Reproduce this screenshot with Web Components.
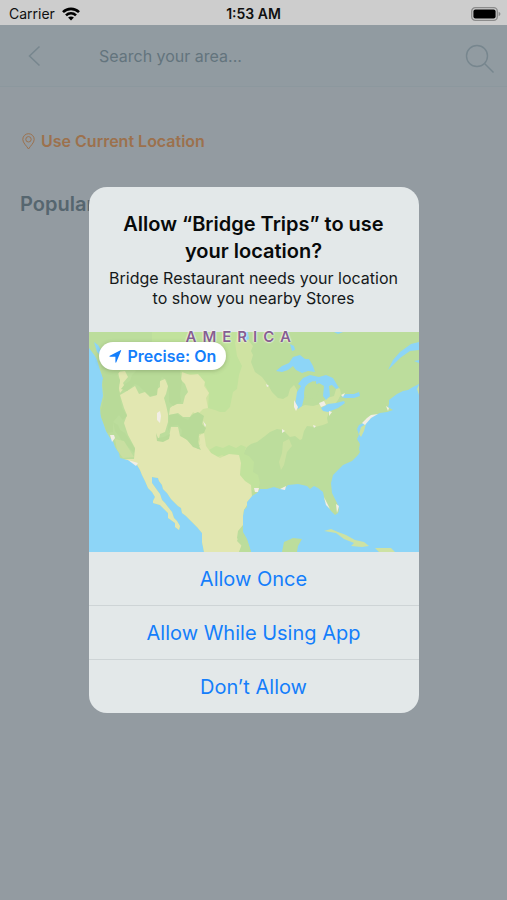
<!DOCTYPE html>
<html lang="en">
<head>
<meta charset="utf-8">
<meta name="viewport" content="width=device-width, initial-scale=1">
<title>Search area</title>
<style>
   html, body {
      margin: 0;
      height: 100%;
   }
   body {
      font-family: Inter, "Liberation Sans", sans-serif;
      background: #939ba1;
      --ink: #63747d;
      --line: #77868e;
      --blue: #147efb;
      --accent: #9c714d;
      --card: #e3e8e9;
   }
</style>
</head>
<body>
<area-screen>
   <status-bar slot="status" carrier="Carrier" time="1:53 AM"></status-bar>
   <search-header slot="header"></search-header>
   <current-location>Use Current Location</current-location>
   <section-title>Popular</section-title>
   <permission-dialog slot="dialog">
      <span slot="title">Allow “Bridge Trips” to use your location?</span>
      <span slot="message">Bridge Restaurant needs your location to show you nearby Stores</span>
      <location-map slot="map"></location-map>
      <dialog-action>Allow Once</dialog-action>
      <dialog-action>Allow While Using App</dialog-action>
      <dialog-action>Don’t Allow</dialog-action>
   </permission-dialog>
</area-screen>

<script>
"use strict";
/* [ templates ]
=================================== */
const
   areaScreen = `
      <style>
         :host {
            display: flex;
            flex-direction: column;
            position: relative;
            min-height: 100%;
         }
         main {
            display: flex;
            flex-direction: column;
            gap: 40px;
            padding: 44px 20px;
         }
         .overlay {
            position: absolute;
            inset: 0;
            display: flex;
            align-items: center;
            justify-content: center;
         }
      </style>
      <slot name="status"></slot>
      <slot name="header"></slot>
      <main><slot></slot></main>
      <div class="overlay"><slot name="dialog"></slot></div>
   `,
   statusBar = `
      <style>
         :host {
            display: grid;
            grid-template-columns: 1fr auto 1fr;
            align-items: center;
            height: 25px;
            padding: 2px 6px 0;
            box-sizing: border-box;
            background: #cdcdcd;
            color: #101010;
            font-size: 14px;
         }
         .left {
            display: flex;
            align-items: center;
            gap: 7px;
            padding-left: 3px;
         }
         .time { font-weight: 600; }
         .battery { justify-self: end; }
         svg { display: block; }
      </style>
      <div class="left">
         <span class="carrier"></span>
         <svg width="18" height="14" viewBox="0 0 18 14" fill="none" stroke="#000" stroke-width="2.6">
            <path d="M1 5.2C5.4 .8 12.6 .8 17 5.2"/>
            <path d="M4 8.4c2.8-2.8 7.2-2.8 10 0"/>
            <path d="M9 13.6l-2.9-3c1.6-1.5 4.2-1.5 5.8 0z" fill="#000" stroke="none"/>
         </svg>
      </div>
      <span class="time"></span>
      <svg class="battery" width="30" height="14" viewBox="0 0 30 14">
         <rect x=".7" y=".7" width="25.6" height="12.6" rx="3.6" fill="none" stroke="#8b8b8b" stroke-width="1.3"/>
         <rect x="2.4" y="2.4" width="22.2" height="9.2" rx="2" fill="#000"/>
         <path d="M27.6 4.8c2.4.8 2.4 3.6 0 4.4z" fill="#8b8b8b"/>
      </svg>
   `,
   searchHeader = `
      <style>
         :host {
            display: flex;
            align-items: center;
            height: 62px;
            padding: 0 12px 0 20px;
            box-sizing: border-box;
            background: #919ba1;
            border-bottom: 1px solid #8c989e;
         }
         button {
            display: flex;
            padding: 0;
            border: 0;
            background: none;
         }
         svg { fill: none; stroke: var(--line); }
         .back { padding: 0 8px; }
         input {
            flex: 1;
            min-width: 0;
            margin-left: 49px;
            padding: 0;
            border: 0;
            outline: 0;
            background: none;
            font: 400 16px/24px Inter, "Liberation Sans", sans-serif;
            color: var(--ink);
         }
         input::placeholder { color: var(--ink); opacity: 1; }
         .find { margin-top: 6px; }
      </style>
      <button class="back" aria-label="Back">
         <svg width="14" height="22" viewBox="0 0 14 22" stroke-width="1.5"><path d="M11.5 1.5L1.5 11l10 9.500"/></svg>
      </button>
      <input type="text" aria-label="Search your area" placeholder="Search your area...">
      <button class="find" aria-label="Search">
         <svg width="30" height="30" viewBox="0 0 30 30" stroke-width="1.400"><circle cx="12" cy="12" r="10.500"/><path d="M19.500 19.500l9 9"/></svg>
      </button>
   `,
   currentLocation = `
      <style>
         :host { display: block; }
         a {
            display: flex;
            align-items: center;
            gap: 6px;
            padding-left: 2px;
            color: var(--accent);
            font-size: 16px;
            font-weight: 600;
            line-height: 20px;
            text-decoration: none;
         }
      </style>
      <a href="#">
         <svg width="13" height="17" viewBox="0 0 13 17" fill="none" stroke="#9c714d">
            <path d="M6.500 16C4.500 12.800 .8 9.800 .8 6.400a5.700 5.700 0 0 1 11.400 0c0 3.400-3.700 6.400-5.700 9.600z"/>
            <circle cx="6.500" cy="6.300" r="2.700"/>
         </svg>
         <slot></slot>
      </a>
   `,
   sectionTitle = `
      <style>
         :host { display: block; }
         h2 {
            margin: 0;
            color: #56666f;
            font-size: 20px;
            font-weight: 600;
            line-height: 27px;
         }
      </style>
      <h2><slot></slot></h2>
   `,
   permissionDialog = `
      <style>
         :host {
            display: block;
            width: min(330px, calc(100% - 32px));
         }
         section {
            overflow: hidden;
            border-radius: 18px;
            background: var(--card);
            text-align: center;
         }
         header {
            padding: 24px 20px;
         }
         h1 {
            margin: 0 0 3px;
            color: #080a0a;
            font-size: 20px;
            font-weight: 600;
            line-height: 27px;
         }
         p {
            margin: 0;
            color: #15191a;
            font-size: 16px;
            line-height: 20px;
         }
      </style>
      <section role="dialog" aria-modal="true" aria-labelledby="title">
         <header>
            <h1 id="title"><slot name="title"></slot></h1>
            <p><slot name="message"></slot></p>
         </header>
         <slot name="map"></slot>
         <slot></slot>
      </section>
   `,
   dialogAction = `
      <style>
         :host { display: block; }
         :host( :not( :last-child ) ) { border-bottom: 1px solid #ced4d6; }
         button {
            display: block;
            width: 100%;
            height: 53px;
            padding: 0;
            border: 0;
            background: none;
            color: var(--blue);
            font: 400 20px/24px Inter, "Liberation Sans", sans-serif;
         }
      </style>
      <button><slot></slot></button>
   `,
   locationMap = `
      <style>
         :host {
            display: block;
            position: relative;
         }
         .map { display: block; width: 100%; }
         .label {
            position: absolute;
            top: -5px;
            left: 97px;
            color: #865f91;
            font-size: 15px;
            font-weight: 600;
            line-height: 20px;
            letter-spacing: 6px;
            text-shadow: 0 0 2px #fff, 0 0 2px #fff;
         }
         button {
            position: absolute;
            top: 10px;
            left: 10px;
            display: flex;
            align-items: center;
            gap: 6px;
            height: 28px;
            padding: 0 10px;
            border: 0;
            border-radius: 14px;
            background: #fff;
            box-shadow: 0 1px 4px rgba( 60, 80, 40, .3 );
            color: var(--blue);
            font: 600 16px/20px Inter, "Liberation Sans", sans-serif;
         }
      </style>
      <svg class="map" viewBox="0 0 330 220" role="img" aria-label="Map of North America">
         <defs>
            <clipPath id="land">
               <path d="M0 0H330V52L324 55 319 58 314 59 308 62 304 65 300 68 300 72 299 75 304 78 298 80 291 81 284 84 280 88 276 90 270 93 268 97 270 103 268 107 271 112 270 117 271 120 269 123 263 129 254 133 249 138 244 143 242 151 243 161 246 167 249 173 250 178 249 181 246 183 242 179 239 175 236 170 235 165 234 160 229 156 225 154 221 157 218 154 209 152 199 153 196 156 191 157 185 155 178 157 171 157 168 161 163 164 158 170 158 175 155 178 154 184 154 193 154 200 158 207 162 220H115L113 210 113 201 108 195 103 190 97 184 93 181 92 176 89 174 85 170 82 167 78 161 74 157 73 153 70 149 69 146 63 145 63 151 68 158 71 162 73 168 76 171 79 175 83 180 85 186 88 189 91 194 90 198 86 195 86 191 82 188 79 186 79 181 76 178 71 173 64 171 64 169 66 165 63 160 59 156 56 149 53 143 51 138 48 133 43 130 39 128 31 126 30 121 26 115 24 109 21 106 17 99 15 93 12 85 11 76 14 64 13 53 14 46 11 38 8 28 6 24 0 16Z"/>
            </clipPath>
         </defs>
         <rect width="330" height="220" fill="#8dd5f7"/>
         <g clip-path="url(#land)">
            <rect width="330" height="220" fill="#bcdd9c"/>
            <!-- plains -->
            <path fill="#cfe3a2" d="M63 0H159L160 9 164 14 162 19 164 23 162 30 166 40 173 45 179 53 183 60 189 66 194 67 199 64 201 57 205 53 208 58 208 76 216 73 224 74 231 72 238 66 245 64 248 54 251 57 252 62 249 68 240 80 238 86 239 91 234 93 226 95 218 94 215 99 213 107 211 108 206 104 201 105 194 98 188 97 181 100 176 104 168 110 162 112 158 115 155 120 151 124 130 127 112 118 104 96 100 60 96 42 76 36 63 20Z"/>
            <path fill="#c1e29c" d="M63 0H150L146 11 148 24 153 34 150 43 148 57 144 60 141 75 136 80 131 80 126 78 119 76 120 61 116 53 111 44 101 42 93 43 76 36 63 20Z"/>
            <path fill="#c1e29c" d="M120 118L127 114 134 116 140 113 147 116 152 113 157 115 155 122 160 124 165 130 164 140 169 143 171 151 168 161 160 156 155 151 151 143 152 130 147 123 139 127 133 123 126 126Z"/>
            <!-- deserts and Mexico -->
            <path fill="#e2e7b1" d="M31 63L38 59 46 54 50 62 56 60 61 65 68 63 67 58 71 55 71 49 76 47 79 54 77 62 75 66 77 73 79 82 79 90 76 100 71 102 70 107 68 109 75 108 80 105 82 95 89 95 91 104 99 108 109 117 112 111 110 104 115 101 117 114 122 121 131 126 140 122 150 123 152 131 151 143 156 149 162 153 163 165 155 178 154 193 149 199 148 206 153 212 150 220H110L60 180 40 133 33 127 45 127 46 116 39 103 35 91 38 83 35 76Z"/>
            <path fill="#e2e7b1" d="M93 40L101 43 109 42 116 50 115 54 120 61 117 66 119 76 114 77 108 83 104 80 101 85 94 85 89 81 80 83 81 76 86 72 94 72 96 64 99 60 96 52 92 48ZM29 40L36 39 39 45 34 51 36 55 31 61 29 56 31 49Z"/>
            <!-- mountains -->
            <path fill="#b8da98" d="M40 32H92L91 43 93 50 91 62 92 70 84 74 80 70 80 60 78 48 73 45 69 54 68 63 61 64 55 59 50 54 46 52 38 59 32 57 36 52 41 49 43 43 47 39ZM12 30L31 30 32 38 28 43 31 48 30 56 31 65 33 76 38 84 34 88 30 83 24 90 24 100 18 101 11 82 15 65 13 47Z"/>
            <path fill="#b8da98" d="M24 90L29 93 31 98 36 101 41 109 46 117 45 121 40 116 34 111 30 104 26 99ZM80 83L88 82 94 86 99 88 104 82 109 80 115 84 113 92 117 96 115 101 110 102 109 112 112 118 104 115 98 108 92 104 93 98 89 93 82 94 79 99ZM67 101L69 106 75 105 81 102 80 107 74 110 68 109Z"/>
            <path fill="#c9dfa1" d="M26 107L35 109 40 117 45 125 34 126 28 118Z"/>
            <path fill="#bcdd9c" d="M149 206L155 202 164 220H150L153 214 148 209Z"/>
            <path fill="#e2e7b1" d="M112 102L115 104 114 111 110 113 111 107Z"/>
            <path fill="#cbe1a1" d="M194 110L200 107 203 114 198 120 195 133 192 138 190 130 193 121Z"/>
         </g>
         <!-- lakes and rivers -->
         <g fill="#8dd5f7">
            <path d="M187 39L193 34 200 31 204 25 211 23 216 27 220 27 224 34 226 40 219 39 213 41 207 38 204 34 199 38 193 40ZM214 46L221 43 230 45 237 43 244 46 247 51 250 56 247 57 243 53 240 54 241 64 237 68 234 64 235 54 230 51 227 53 227 49 220 51 216 55 215 66 213 74 209 77 206 73 208 60 212 54 209 52ZM232 76L239 72 247 71 255 69 256 71 249 76 239 80 234 79ZM252 65L257 62 265 62 270 60 271 64 265 66 256 66ZM299 38L304 28 311 20 322 12 330 10V18L321 19 311 26ZM245 0H254L249 2ZM201 12L205 14 206 18 203 19Z"/>
            <path d="M152 0H159L160 7 155 10ZM5 10L9 13 12 18 11 23 8 20Z"/>
            <path d="M325 29L330 28V31Z"/>
         </g>
         <path fill="#bcdd9c" d="M218 53L224 49 229 53 230 59 226 66 218 67 215 62 216 56Z"/>
         <path fill="#cde2a0" d="M272 95L277 92 275 99 272 105 270 102ZM328 57L330 53V63Z"/>
         <!-- islands and Yucatan -->
         <path fill="#cde2a4" d="M235 199L242 197 249 200 257 203 266 208 275 210 280 214 273 215 262 214 265 211 255 207 247 201ZM286 216L302 216 306 220H290Z"/>
         <path fill="#bcdd9c" d="M193 220L195 210 204 206 213 207 209 214 208 220Z"/>
         <!-- cities and salt lakes -->
         <g fill="#f2eee5">
            <path d="M68 81L71 79 72 84 71 91 68 88ZM114 89L117 93 116 95ZM21 103L25 103 26 106 23 110ZM39 128L49 131 47 134ZM165 156L170 156 169 160 166 160ZM191 157L197 154 196 158ZM205 68L209 75 207 79 205 75ZM230 71L235 69 237 73 232 75ZM240 79L243 80 240 84ZM252 63L256 61 254 65ZM273 91L278 86 282 83 289 82 282 86 276 93ZM297 74L300 76 299 79ZM247 172L250 174 248 181ZM235 165L238 171 241 177 237 173ZM177 52L180 54 178 55ZM193 97L196 99 193 101ZM224 93L227 94 225 96Z"/>
         </g>
      </svg>
      <span class="label">AMERICA</span>
      <button>
         <svg width="13" height="13" viewBox="0 0 13 13"><path d="M12.200 .6L7.300 12.300c-.3.500-.8.400-.9-.1V6.700H.9c-.6-.1-.6-.7-.1-.9L11.500.2c.5-.2.8 0 .7.400z" fill="#147efb"/></svg>
         <span>Precise: On</span>
      </button>
   `
;

/* [ elements ]
=================================== */
class BaseElement extends HTMLElement {
   constructor() {
      super();
      const template = document.createElement( "template" );
      template.innerHTML = this.constructor.markup;
      this.attachShadow( { mode: "open" } ).append(
         template.content.cloneNode( true )
      );
   }
}

class StatusBar extends BaseElement {
   static markup = statusBar;
   connectedCallback() {
      this.shadowRoot.querySelector( ".carrier" ).textContent = this.getAttribute( "carrier" );
      this.shadowRoot.querySelector( ".time" ).textContent = this.getAttribute( "time" );
   }
}

class LocationMap extends BaseElement {
   static markup = locationMap;
   connectedCallback() {
      const
         button = this.shadowRoot.querySelector( "button" ),
         text = button.querySelector( "span" )
      ;
      button.addEventListener( "click", () => {
         text.textContent = text.textContent.endsWith( "On" ) ? "Precise: Off" : "Precise: On";
      } );
   }
}

class PermissionDialog extends BaseElement {
   static markup = permissionDialog;
   connectedCallback() {
      this.addEventListener( "click", ev => {
         if( ev.target.closest( "dialog-action" ) ) this.remove();
      } );
   }
}

customElements.define( "area-screen", class extends BaseElement { static markup = areaScreen; } );
customElements.define( "status-bar", StatusBar );
customElements.define( "search-header", class extends BaseElement { static markup = searchHeader; } );
customElements.define( "current-location", class extends BaseElement { static markup = currentLocation; } );
customElements.define( "section-title", class extends BaseElement { static markup = sectionTitle; } );
customElements.define( "dialog-action", class extends BaseElement { static markup = dialogAction; } );
customElements.define( "location-map", LocationMap );
customElements.define( "permission-dialog", PermissionDialog );
</script>
</body>
</html>
